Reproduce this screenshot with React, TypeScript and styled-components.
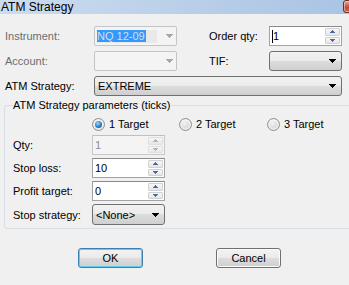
import styled, { createGlobalStyle } from "styled-components";

const GlobalStyle = createGlobalStyle`
  html, body {
    margin: 0;
    padding: 0;
    background: #f0f0f0;
  }
  body {
    font-family: "Liberation Sans", Arial, sans-serif;
    font-size: 11px;
    color: #000;
  }
`;

const Window = styled.div`
  width: 349px;
  height: 285px;
  overflow: hidden;
  background: #f0f0f0;
  display: flex;
  flex-direction: column;
`;

const TitleBar = styled.div`
  height: 14px;
  flex: none;
  display: flex;
  align-items: flex-start;
  justify-content: space-between;
  background: linear-gradient(to right, #cbdcef, #aac4e4);
`;

const Title = styled.span`
  font-size: 12px;
  line-height: 14px;
  padding-left: 1px;
`;

const CloseButton = styled.div`
  width: 16px;
  height: 13px;
  margin-right: -10px;
  box-sizing: border-box;
  border: 1px solid #6b2d24;
  border-radius: 3px;
  background: linear-gradient(#e9ab9b, #c54a36 55%, #d0604a);
  box-shadow: inset 0 0 0 1px rgba(255, 255, 255, 0.45);
`;

const TopForm = styled.div`
  display: grid;
  grid-template-columns: 89px 83px 32px 60px 73px;
  grid-template-rows: 20px 20px 20px;
  row-gap: 5px;
  align-items: center;
  padding: 12px 0 0 5px;
`;

const Label = styled.span<{ $disabled?: boolean }>`
  color: ${(p) => (p.$disabled ? "#6d6d6d" : "#000")};
  white-space: nowrap;
`;

const DisabledCombo = styled.div`
  height: 20px;
  box-sizing: border-box;
  border: 1px solid #c4c4c4;
  border-radius: 2px;
  background: #f4f4f4;
  display: flex;
  align-items: center;
  justify-content: space-between;
  padding: 0 3px 0 2px;
`;

const EditArea = styled.div`
  width: 60px;
  height: 13px;
  background: #e9e9e9;
  display: flex;
  align-items: center;
`;

const Selection = styled.span`
  background: #3399ff;
  color: #d6dde6;
  height: 12px;
  line-height: 12px;
  padding: 0 1px 0 0;
`;

const ListCombo = styled.div<{ $span?: boolean; $height?: number }>`
  grid-column: ${(p) => (p.$span ? "2 / 6" : "auto")};
  height: ${(p) => p.$height ?? 20}px;
  box-sizing: border-box;
  border: 1px solid #707070;
  border-radius: 3px;
  background: linear-gradient(#f2f2f2 0%, #ebebeb 50%, #dddddd 50%, #cfcfcf 100%);
  display: flex;
  align-items: center;
  justify-content: space-between;
  padding: 0 5px 0 3px;
`;

const SpinBox = styled.div<{ $disabled?: boolean }>`
  height: 20px;
  box-sizing: border-box;
  display: flex;
  border: 1px solid ${(p) => (p.$disabled ? "#c8c8c8" : "#a3a3a3")};
  border-top-color: ${(p) => (p.$disabled ? "#c0c0c0" : "#8a8a8a")};
  background: ${(p) => (p.$disabled ? "#f4f4f4" : "#fff")};
`;

const SpinValue = styled.span<{ $disabled?: boolean }>`
  flex: 1;
  display: flex;
  align-items: center;
  padding-left: 2px;
  color: ${(p) => (p.$disabled ? "#8d8d8d" : "#000")};
`;

const Caret = styled.span`
  width: 1px;
  height: 13px;
  background: #000;
  margin-right: 0;
`;

const SpinButtons = styled.div`
  width: 15px;
  display: flex;
  flex-direction: column;
  gap: 1px;
  padding: 1px 1px 1px 0;
`;

const SpinButton = styled.div<{ $disabled?: boolean }>`
  flex: 1;
  box-sizing: border-box;
  border: 1px solid ${(p) => (p.$disabled ? "#e0e0e0" : "#d2d2d2")};
  border-radius: 1px;
  background: linear-gradient(#f7f7f7, #e6e6e6);
  display: flex;
  align-items: center;
  justify-content: center;
`;

const Group = styled.fieldset`
  margin: 3px 0 0 4px;
  width: 380px;
  min-width: 0;
  box-sizing: border-box;
  padding: 5px 0 3px 8px;
  border: 1px solid #d5dfe5;
  border-radius: 3px;
`;

const Legend = styled.legend`
  padding: 0;
  font-size: 11px;
  line-height: 13px;
`;

const RadioRow = styled.div`
  display: grid;
  grid-template-columns: 79px 87px 88px 80px;
  height: 14px;
  align-items: center;
`;

const RadioOption = styled.label`
  display: flex;
  align-items: center;
  gap: 4px;
  white-space: nowrap;
`;

const RadioCircle = styled.span<{ $checked?: boolean }>`
  width: 13px;
  height: 13px;
  box-sizing: border-box;
  border-radius: 50%;
  border: 1px solid #8f8f8f;
  background: radial-gradient(circle at 50% 40%, #ffffff, #dcdcdc);
  display: flex;
  align-items: center;
  justify-content: center;

  &::after {
    content: "";
    width: 7px;
    height: 7px;
    border-radius: 50%;
    background: ${(p) =>
      p.$checked
        ? "radial-gradient(circle at 40% 35%, #9fd6f7, #2a7fc0 55%, #0d3f6e)"
        : "radial-gradient(circle at 40% 35%, #f4f4f4, #cfcfcf)"};
  }
`;

const ParamGrid = styled.div`
  display: grid;
  grid-template-columns: 79px 73px;
  grid-template-rows: 20px 20px 20px 21px;
  row-gap: 3px;
  align-items: center;
  margin-top: 4px;
`;

const ButtonRow = styled.div`
  display: flex;
  gap: 73px;
  padding-left: 78px;
  margin-top: 19px;
`;

const DialogButton = styled.button<{ $default?: boolean }>`
  width: 65px;
  height: 20px;
  box-sizing: border-box;
  padding: 0;
  font: 11px "Liberation Sans", Arial, sans-serif;
  color: #000;
  border: 1px solid ${(p) => (p.$default ? "#3c7fb1" : "#707070")};
  border-radius: 3px;
  background: linear-gradient(#f2f2f2 0%, #ebebeb 50%, #dddddd 50%, #cfcfcf 100%);
  box-shadow: ${(p) => (p.$default ? "inset 0 0 0 1px #62cdf5" : "inset 0 0 0 1px #fbfbfb")};
`;

const DropArrow = ({ color = "#000" }: { color?: string }) => (
  <svg width="7" height="4" viewBox="0 0 7 4" shapeRendering="crispEdges">
    <rect x="0" y="0" width="7" height="1" fill={color} />
    <rect x="1" y="1" width="5" height="1" fill={color} />
    <rect x="2" y="2" width="3" height="1" fill={color} />
    <rect x="3" y="3" width="1" height="1" fill={color} />
  </svg>
);

const SpinArrow = ({ up, color }: { up?: boolean; color: string }) => (
  <svg
    width="5"
    height="3"
    viewBox="0 0 5 3"
    shapeRendering="crispEdges"
    style={{ transform: up ? "none" : "scaleY(-1)" }}
  >
    <rect x="2" y="0" width="1" height="1" fill={color} />
    <rect x="1" y="1" width="3" height="1" fill={color} />
    <rect x="0" y="2" width="5" height="1" fill={color} />
  </svg>
);

function Spin({ value, disabled, caret }: { value: string; disabled?: boolean; caret?: boolean }) {
  const arrowColor = disabled ? "#b4b4b4" : "#4c6a9c";
  return (
    <SpinBox $disabled={disabled}>
      <SpinValue $disabled={disabled}>
        {caret && <Caret />}
        {value}
      </SpinValue>
      <SpinButtons>
        <SpinButton $disabled={disabled}>
          <SpinArrow up color={arrowColor} />
        </SpinButton>
        <SpinButton $disabled={disabled}>
          <SpinArrow color={arrowColor} />
        </SpinButton>
      </SpinButtons>
    </SpinBox>
  );
}

export default function App() {
  return (
    <>
      <GlobalStyle />
      <Window>
        <TitleBar>
          <Title>ATM Strategy</Title>
          <CloseButton />
        </TitleBar>

        <TopForm>
          <Label $disabled>Instrument:</Label>
          <DisabledCombo>
            <EditArea>
              <Selection>NQ 12-09</Selection>
            </EditArea>
            <DropArrow color="#a7a7a7" />
          </DisabledCombo>
          <span />
          <Label>Order qty:</Label>
          <Spin value="1" caret />

          <Label $disabled>Account:</Label>
          <DisabledCombo>
            <span />
            <DropArrow color="#a7a7a7" />
          </DisabledCombo>
          <span />
          <Label>TIF:</Label>
          <ListCombo>
            <span />
            <DropArrow />
          </ListCombo>

          <Label>ATM Strategy:</Label>
          <ListCombo $span>
            <span>EXTREME</span>
            <DropArrow />
          </ListCombo>
        </TopForm>

        <Group>
          <Legend>ATM Strategy parameters (ticks)</Legend>
          <RadioRow>
            <span />
            <RadioOption>
              <RadioCircle $checked />1 Target
            </RadioOption>
            <RadioOption>
              <RadioCircle />2 Target
            </RadioOption>
            <RadioOption>
              <RadioCircle />3 Target
            </RadioOption>
          </RadioRow>
          <ParamGrid>
            <Label>Qty:</Label>
            <Spin value="1" disabled />
            <Label>Stop loss:</Label>
            <Spin value="10" />
            <Label>Profit target:</Label>
            <Spin value="0" />
            <Label>Stop strategy:</Label>
            <ListCombo $height={21}>
              <span>&lt;None&gt;</span>
              <DropArrow />
            </ListCombo>
          </ParamGrid>
        </Group>

        <ButtonRow>
          <DialogButton $default>OK</DialogButton>
          <DialogButton>Cancel</DialogButton>
        </ButtonRow>
      </Window>
    </>
  );
}
